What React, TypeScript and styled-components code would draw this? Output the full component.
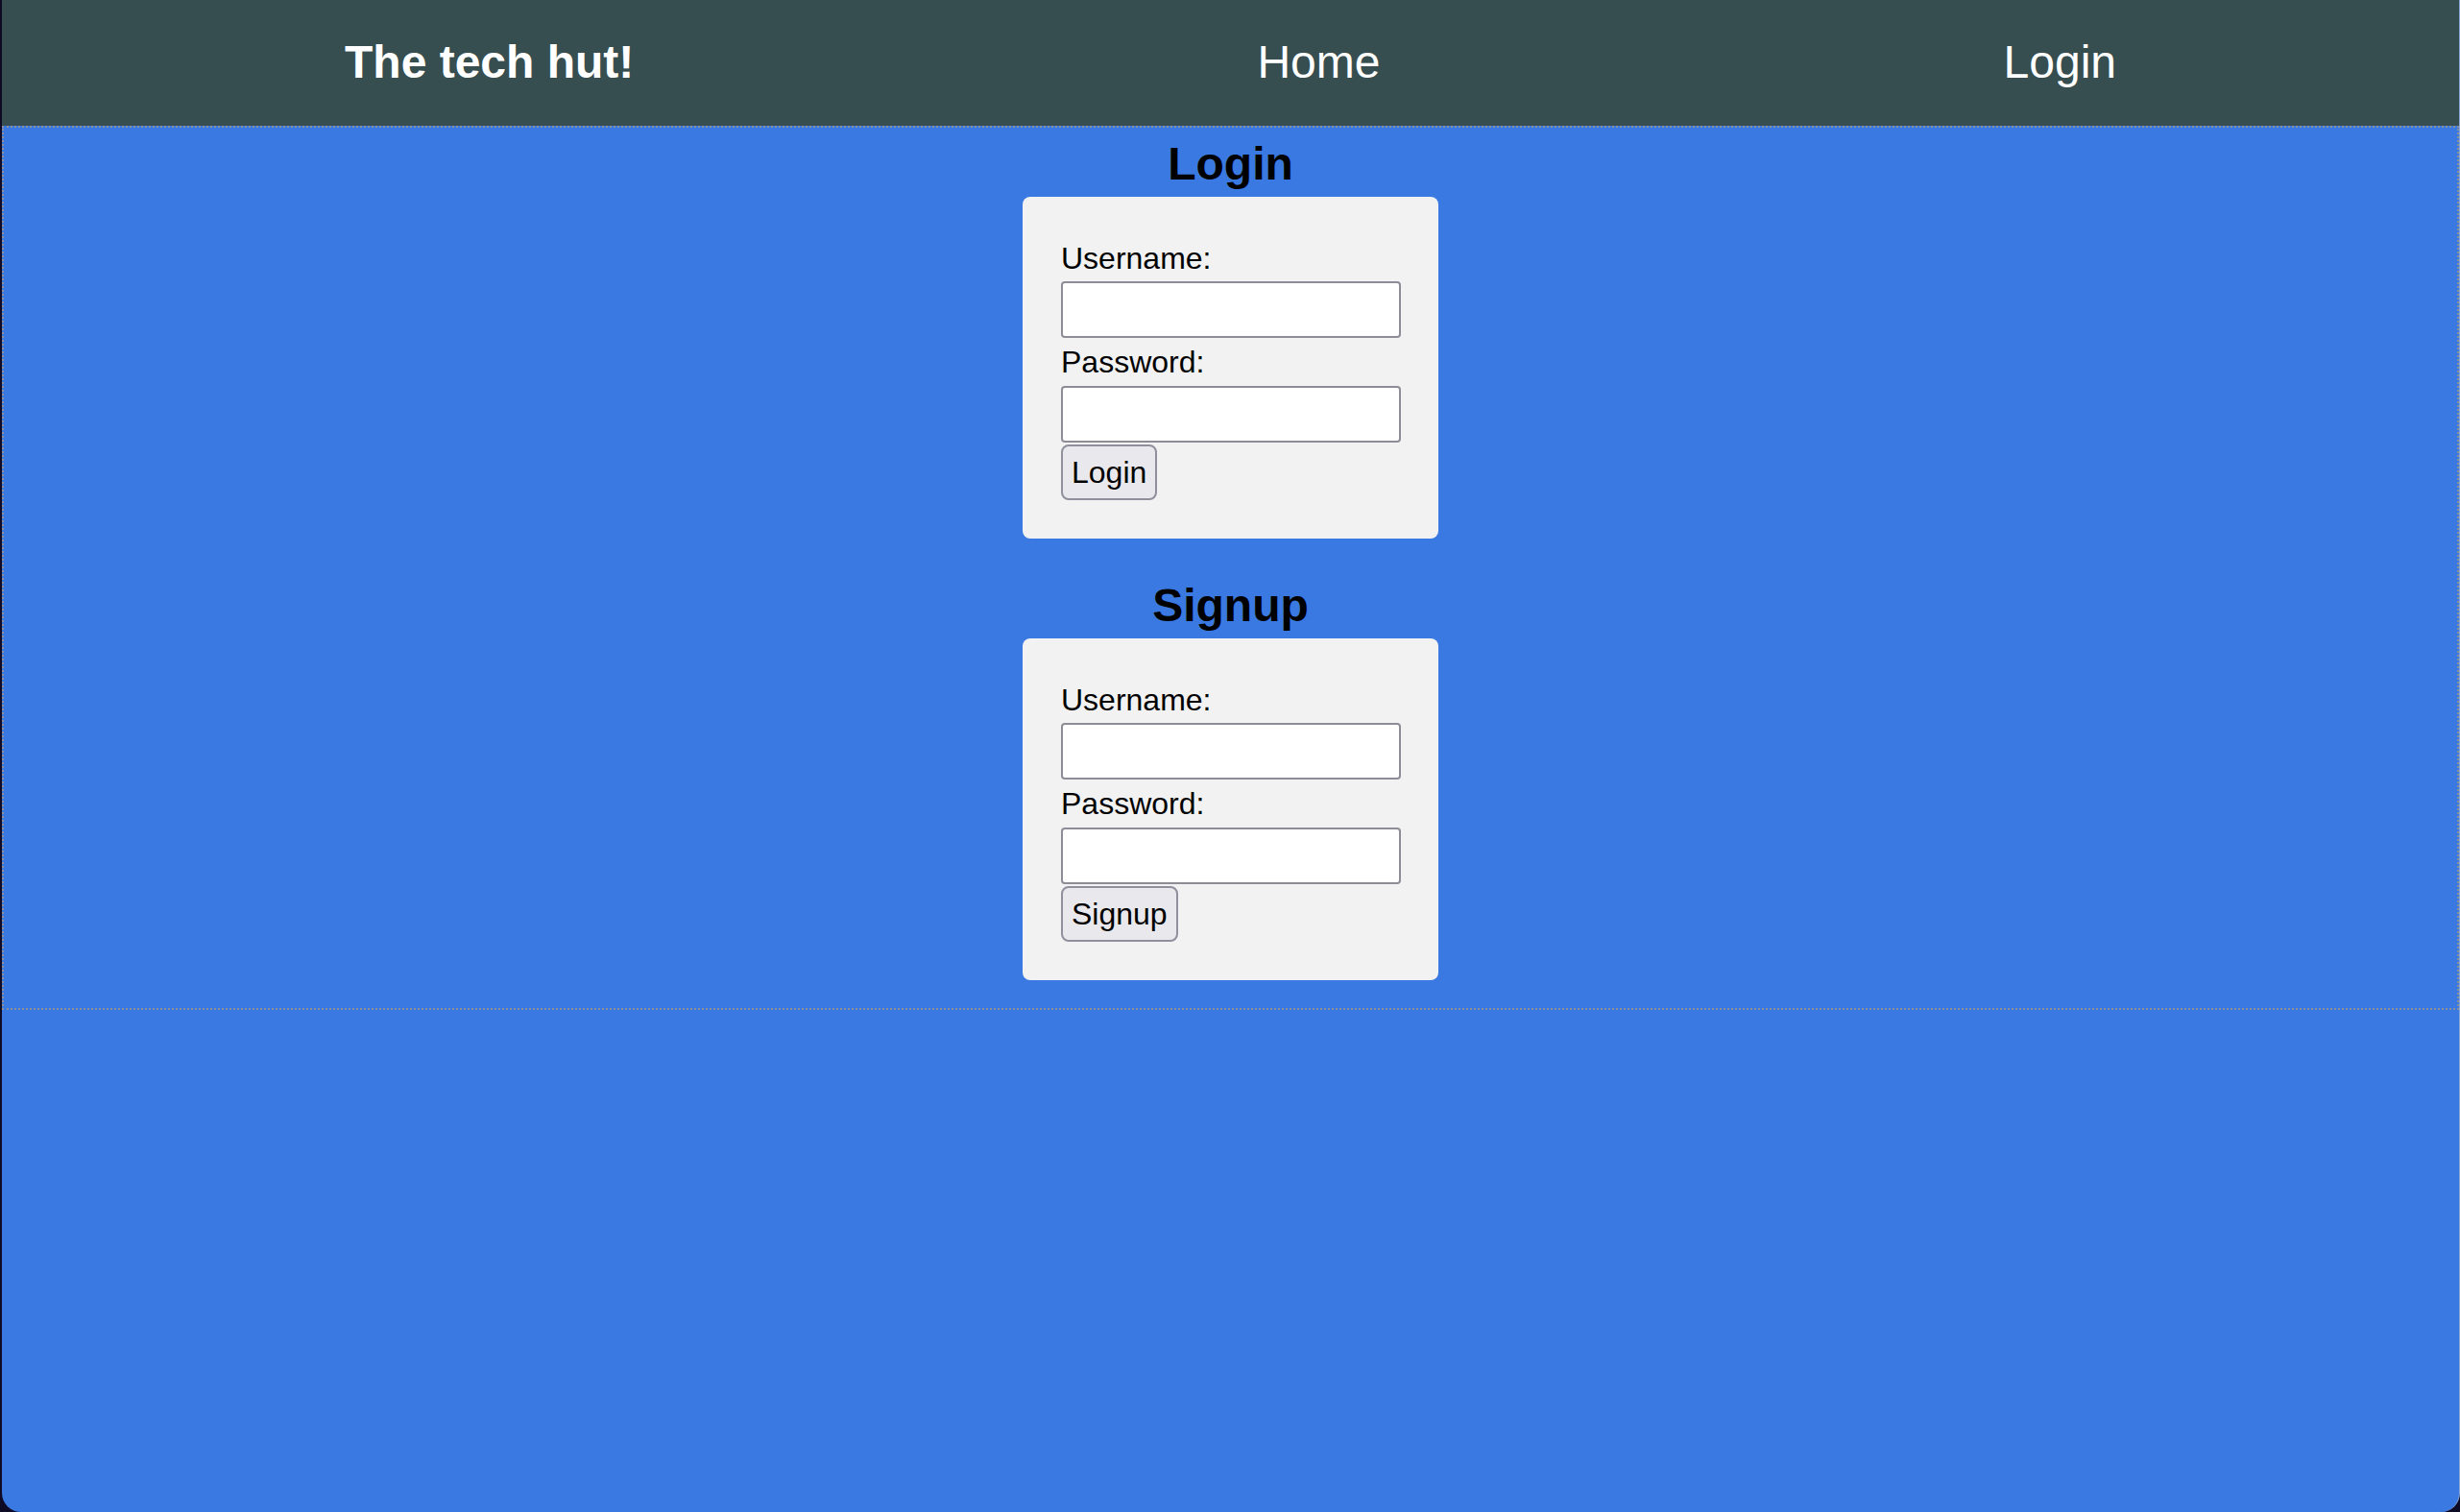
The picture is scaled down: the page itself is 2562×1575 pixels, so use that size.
import React from "react";
import styled, { createGlobalStyle } from "styled-components";

const GlobalStyle = createGlobalStyle`
  html, body {
    margin: 0;
    padding: 0;
    background: #0d0b26;
  }
  body {
    font-family: "Liberation Sans", Arial, Helvetica, sans-serif;
  }
  * { box-sizing: border-box; }
`;

const Screen = styled.div`
  min-height: 1575px;
  padding-left: 2px;
  background: #0d0b26;
  display: flex;
`;

const Window = styled.div`
  flex: 1;
  min-height: 1575px;
  background: #3a79e1;
  border-bottom-left-radius: 20px;
  border-bottom-right-radius: 20px;
  border-right: 1px solid #8aa6d8;
  overflow: hidden;
  display: flex;
  flex-direction: column;
`;

const NavBar = styled.nav`
  height: 131px;
  background: #374e50;
  display: flex;
  align-items: center;
  justify-content: space-between;
  padding: 0 357px 3px;
  color: #ffffff;
`;

const Brand = styled.span`
  font-size: 48px;
  font-weight: bold;
  line-height: 55px;
`;

const NavLink = styled.a`
  font-size: 48px;
  line-height: 55px;
  color: #ffffff;
  text-decoration: none;
  cursor: pointer;
`;

const Main = styled.main`
  border: 2px dotted #8a8f99;
  padding: 10px 0 29px;
  display: flex;
  flex-direction: column;
  align-items: center;
`;

const Section = styled.section<{ $gapTop?: number }>`
  display: flex;
  flex-direction: column;
  align-items: center;
  margin-top: ${(p) => p.$gapTop ?? 0}px;
`;

const Heading = styled.h2`
  margin: 0 0 7px;
  font-size: 48px;
  line-height: 55px;
  font-weight: bold;
  color: #000000;
`;

const Card = styled.form`
  width: 433px;
  background: #f2f2f2;
  border-radius: 8px;
  padding: 46px 40px 40px;
  display: flex;
  flex-direction: column;
  align-items: flex-start;
`;

const Label = styled.label<{ $mb: number }>`
  display: block;
  font-size: 32px;
  line-height: 37px;
  color: #000000;
  margin-bottom: ${(p) => p.$mb}px;
`;

const Input = styled.input<{ $mb: number }>`
  display: block;
  width: 354px;
  height: 59px;
  background: #ffffff;
  border: 2px solid #8e8c96;
  border-radius: 4px;
  font-size: 32px;
  font-family: inherit;
  padding: 0 6px;
  margin: 0 0 ${(p) => p.$mb}px;
`;

const SubmitButton = styled.button`
  height: 58px;
  padding: 0 9px;
  background: #e9e9ed;
  border: 2px solid #8f8f9d;
  border-radius: 8px;
  font-family: inherit;
  font-size: 32px;
  line-height: 37px;
  color: #000000;
  cursor: pointer;
`;

type FormProps = { title: string; action: string; gapTop?: number };

const AuthForm = ({ title, action, gapTop }: FormProps) => (
  <Section $gapTop={gapTop}>
    <Heading>{title}</Heading>
    <Card onSubmit={(e) => e.preventDefault()}>
      <Label $mb={5}>Username:</Label>
      <Input type="text" $mb={7} />
      <Label $mb={6}>Password:</Label>
      <Input type="password" $mb={2} />
      <SubmitButton type="submit">{action}</SubmitButton>
    </Card>
  </Section>
);

export default function App() {
  return (
    <>
      <GlobalStyle />
      <Screen>
        <Window>
          <NavBar>
            <Brand>The tech hut!</Brand>
            <NavLink>Home</NavLink>
            <NavLink>Login</NavLink>
          </NavBar>
          <Main>
            <AuthForm title="Login" action="Login" />
            <AuthForm title="Signup" action="Signup" gapTop={42} />
          </Main>
        </Window>
      </Screen>
    </>
  );
}
